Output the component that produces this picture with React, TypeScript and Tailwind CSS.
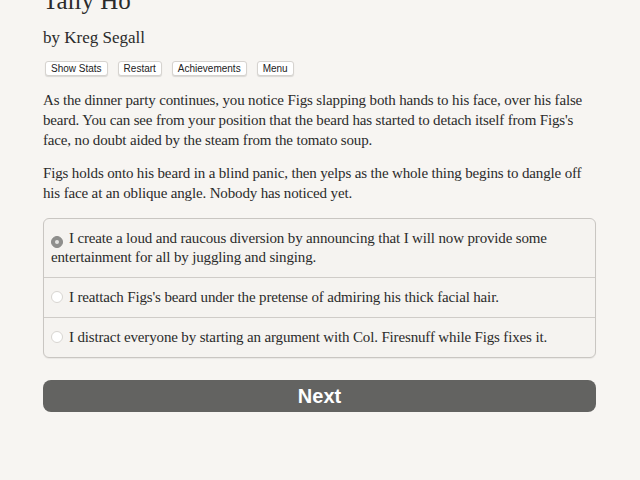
import { useState } from "react";

const choices = [
  "I create a loud and raucous diversion by announcing that I will now provide some entertainment for all by juggling and singing.",
  "I reattach Figs's beard under the pretense of admiring his thick facial hair.",
  "I distract everyone by starting an argument with Col. Firesnuff while Figs fixes it.",
];

const menu = ["Show Stats", "Restart", "Achievements", "Menu"];

export default function App() {
  const [selected, setSelected] = useState(0);

  return (
    <div className="h-screen overflow-hidden bg-[#f7f5f2] text-[#2b2b2b] font-['Liberation_Serif',serif]">
      <div className="ml-[43px] w-[553px] -mt-[14px]">
        <h1 className="text-[25px] leading-[30px]">Tally Ho</h1>
        <div className="mt-[11px] text-[17px] leading-[22px]">by Kreg Segall</div>
        <div className="mt-[12px] flex gap-[10px] pl-[2px]">
          {menu.map((label) => (
            <button
              key={label}
              type="button"
              className="h-[15px] rounded-[3px] border border-[#d6d3cf] bg-white px-[5px] font-['Liberation_Sans',sans-serif] text-[10px] leading-[13px] text-[#222] shadow-[0_1px_1px_rgba(0,0,0,0.12)]"
            >
              {label}
            </button>
          ))}
        </div>
        <div className="mt-[14px] text-[15px] leading-[20px] tracking-[-0.15px]">
          <p>
            As the dinner party continues, you notice Figs slapping both hands to his face, over his false
            beard. You can see from your position that the beard has started to detach itself from Figs's
            face, no doubt aided by the steam from the tomato soup.
          </p>
          <p className="mt-[13px]">
            Figs holds onto his beard in a blind panic, then yelps as the whole thing begins to dangle off
            his face at an oblique angle. Nobody has noticed yet.
          </p>
        </div>
        <div className="mt-[15px] rounded-[6px] border border-[#c9c6c2] bg-[#f5f3f0] divide-y divide-[#cfccc8] shadow-[0_1px_1px_rgba(0,0,0,0.06)]">
          {choices.map((text, i) => (
            <label
              key={i}
              className="block cursor-pointer px-[7px] py-[10px] text-[15px] leading-[19px] tracking-[-0.15px]"
              onClick={() => setSelected(i)}
            >
              <span
                className={`mr-[6px] inline-flex h-[12px] w-[12px] translate-y-[1px] items-center justify-center rounded-full border align-baseline ${
                  i === selected ? "border-[#8b8b89] bg-[#8f8f8d]" : "border-[#d8d5d1] bg-white"
                }`}
              >
                {i === selected && <span className="h-[4px] w-[4px] rounded-full bg-[#e4e4e2]" />}
              </span>
              {text}
            </label>
          ))}
        </div>
        <button
          type="button"
          className="mt-[22px] h-[32px] w-full rounded-[8px] bg-[#636361] font-['Liberation_Sans',sans-serif] text-[20px] font-bold text-white"
        >
          Next
        </button>
      </div>
    </div>
  );
}
